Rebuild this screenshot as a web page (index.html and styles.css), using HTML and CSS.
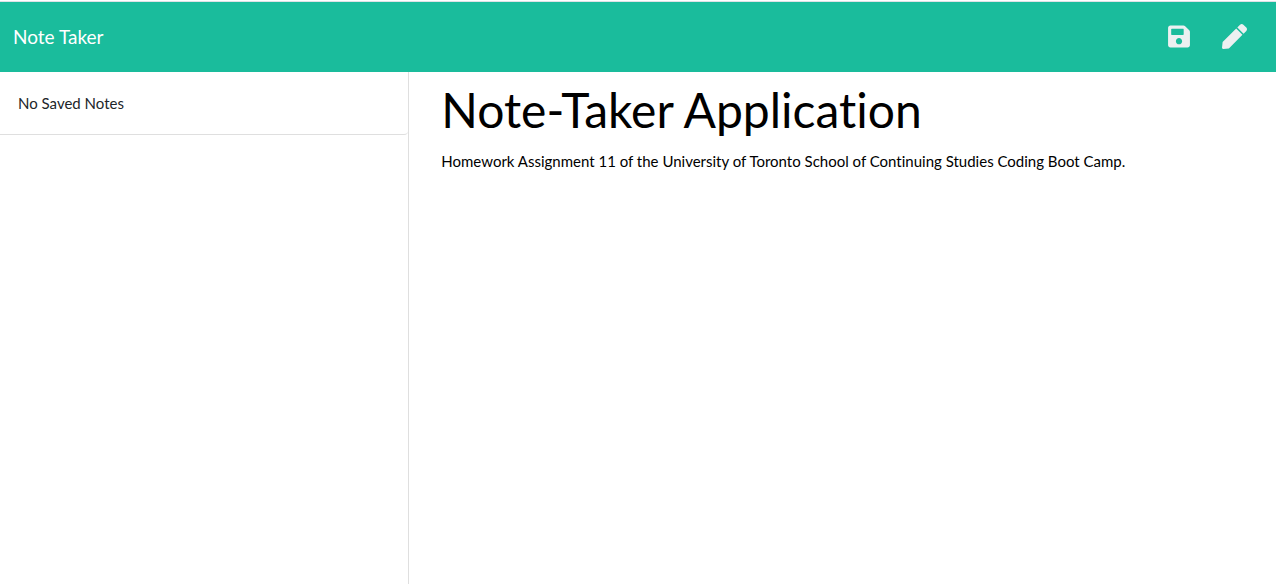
FILE: index.html
```html
<!DOCTYPE html>
<html lang="en">
<head>
<meta charset="utf-8">
<title>Note Taker</title>
<link rel="stylesheet" href="styles.css">
</head>
<body>
<header class="navbar">
  <a class="brand" href="#">Note Taker</a>
  <div class="actions">
    <button class="icon-btn" type="button" aria-label="Save note">
      <svg class="icon-save" viewBox="0 0 448 512" aria-hidden="true"><path d="M433.941 129.941l-83.882-83.882A48 48 0 0 0 316.118 32H48C21.490 32 0 53.490 0 80v352c0 26.510 21.490 48 48 48h352c26.510 0 48-21.490 48-48V163.882a48 48 0 0 0-14.059-33.941zM224 416c-35.346 0-64-28.654-64-64 0-35.346 28.654-64 64-64s64 28.654 64 64c0 35.346-28.654 64-64 64zm96-304.520V212c0 6.627-5.373 12-12 12H76c-6.627 0-12-5.373-12-12V108c0-6.627 5.373-12 12-12h228.520c3.183 0 6.235 1.264 8.485 3.515l3.480 3.480A11.996 11.996 0 0 1 320 111.480z"/></svg>
    </button>
    <button class="icon-btn" type="button" aria-label="New note">
      <svg class="icon-pen" viewBox="0 0 512 512" aria-hidden="true"><path d="M290.740 93.240l128.020 128.020-277.990 277.990-114.140 12.600C11.350 513.540-1.560 500.620.140 485.340l12.700-114.220 277.900-277.880zm207.200-19.060l-60.110-60.110c-18.750-18.750-49.160-18.750-67.910 0l-56.550 56.550 128.020 128.020 56.550-56.550c18.750-18.760 18.750-49.160 0-67.910z"/></svg>
    </button>
  </div>
</header>
<div class="layout">
  <aside class="sidebar">
    <ul class="note-list"><li class="note">No Saved Notes</li></ul>
  </aside>
  <main class="content">
    <h1 class="title">Note-Taker Application</h1>
    <p class="lead">Homework Assignment 11 of the University of Toronto School of Continuing Studies Coding Boot Camp.</p>
  </main>
</div>
</body>
</html>
```

FILE: styles.css
```css
* { box-sizing: border-box; }
body {
  margin: 0;
  min-height: 100vh;
  display: flex;
  flex-direction: column;
  font: 15px/24px Lato, sans-serif;
  font-variant-ligatures: none;
  color: #000;
  background: #fff;
}
.navbar {
  display: flex;
  align-items: center;
  justify-content: space-between;
  height: 71px;
  margin-top: 1px;
  padding: 0 29px 0 13px;
  border-top: 1px solid #dee1e6;
  background: #1abc9c;
}
.brand { color: #fff; font-size: 19px; text-decoration: none; }
.actions { display: flex; gap: 32px; padding-bottom: 2px; }
.icon-btn {
  display: flex;
  padding: 0;
  border: 0;
  background: none;
  color: #ecf0f1;
  cursor: pointer;
}
.icon-btn svg { height: 25px; fill: currentColor; }
.icon-save { width: 22px; }
.icon-pen { width: 25px; }
.layout {
  flex: 1;
  display: grid;
  grid-template-columns: calc(32% + 1px) 1fr;
}
.sidebar { border-right: 1px solid #dfdfdf; }
.note-list { margin: 0; padding: 0; list-style: none; }
.note {
  padding: 19px 18px;
  border-bottom: 1px solid #dfdfdf;
  border-bottom-right-radius: 4px;
  color: #212529;
}
.content { padding: 9px 32px; }
.title { margin: 0 0 10px; font-size: 48px; line-height: 58px; font-weight: 400; }
.lead { margin: 0; }
```
